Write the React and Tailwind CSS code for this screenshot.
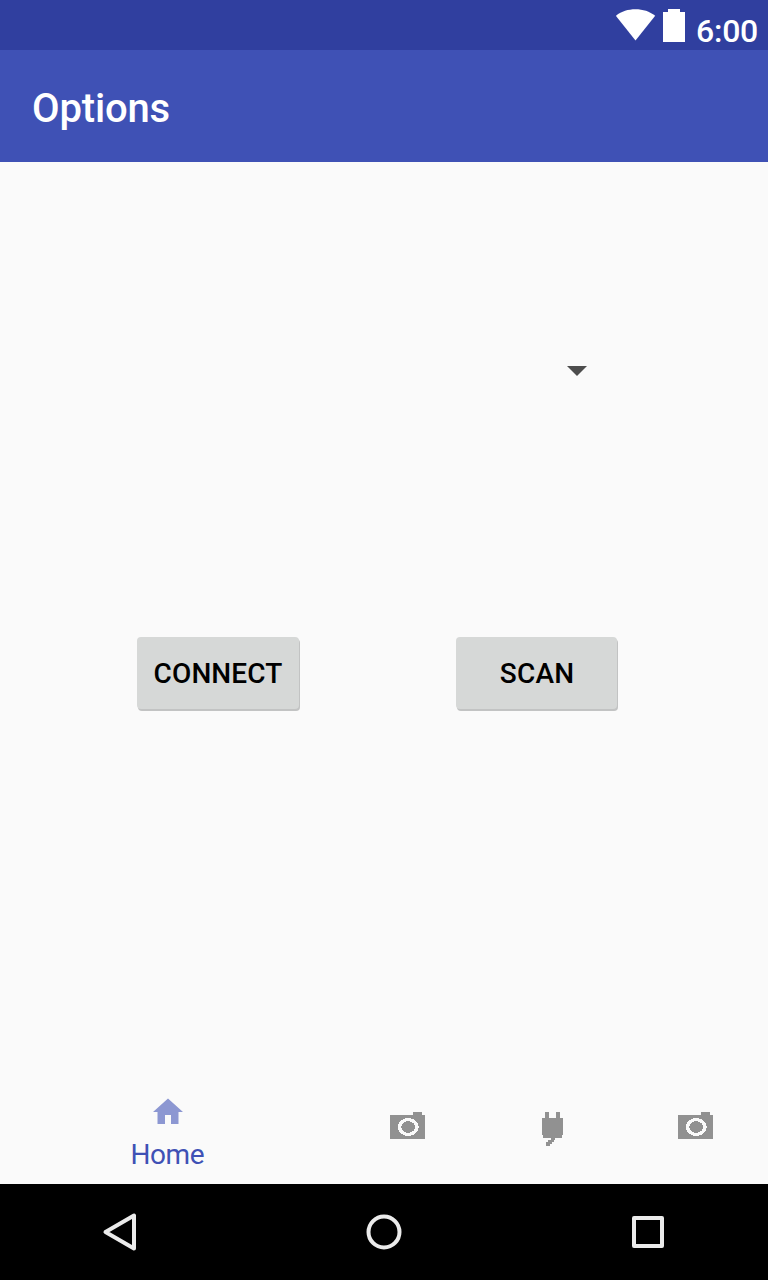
function StatusBar() {
  return (
    <header className="flex h-[50px] items-start justify-end bg-[#303f9f] pr-[10px] text-white">
      <svg className="mt-[9px] h-8 w-10 shrink-0" viewBox="0 0 40 32" fill="currentColor">
        <path d="M-0.200 6.800C5.500 2.200 12 0.200 19.500 0.200s14 2 19.700 6.600L19.500 31.500z" />
      </svg>
      <svg className="mt-[9px] ml-[7px] h-[33px] w-[22px] shrink-0" viewBox="0 0 22 33" fill="currentColor">
        <path d="M0 3h5V0h12v3h5v30H0z" />
      </svg>
      <span className="mt-[11px] ml-[11px] text-[32px] leading-[40px] font-medium tracking-[-0.250px]">6:00</span>
    </header>
  );
}

function RaisedButton({ children, className }) {
  return (
    <button
      className={`h-[72px] rounded-[4px] bg-[#d6d8d7] pt-[2px] text-[28px] leading-8 font-medium text-black shadow-[1px_2px_0_0_#c2c3c3] ${className}`}
    >
      {children}
    </button>
  );
}

function CameraIcon() {
  return (
    <svg className="size-12" viewBox="0 0 48 48" shapeRendering="crispEdges">
      <path d="M6 11h23V8h9v3h3v24H6z" fill="#919191" />
      <ellipse cx="24.300" cy="23" rx="10.500" ry="9" fill="#fafafa" />
      <ellipse cx="24.200" cy="23" rx="6.900" ry="5.800" fill="#919191" />
    </svg>
  );
}

function PlugIcon() {
  return (
    <svg className="size-12" viewBox="0 0 48 48" fill="#919191" shapeRendering="crispEdges">
      <path d="M17 8h4v6h7V8h4v6h3v17h-1v3h-7v2h-1v2h-2v2h-2v2h-4v-4h2v-2h3v-2h-8v-3h-1V14h3z" />
    </svg>
  );
}

export default function App() {
  return (
    <div className="flex h-[1280px] w-[768px] flex-col overflow-hidden bg-[#fafafa] font-[Roboto,sans-serif]">
      <StatusBar />
      <div className="flex h-28 shrink-0 items-center bg-[#3f51b5] px-8 pt-[6px]">
        <h1 className="text-[40px] leading-[48px] font-medium tracking-[-0.150px] text-white">Options</h1>
      </div>
      <main className="flex flex-1 flex-col">
        <div className="flex justify-end pt-[204px] pr-[181px]">
          <svg className="h-[10px] w-5" viewBox="0 0 20 10" fill="#4d4d4d">
            <path d="M0 0h20L10 10z" />
          </svg>
        </div>
        <div className="mt-[261px] flex gap-[157px] pl-[137px]">
          <RaisedButton className="w-[162px] tracking-[0.100px]">CONNECT</RaisedButton>
          <RaisedButton className="w-[161px] pl-px tracking-[0.200px]">SCAN</RaisedButton>
        </div>
      </main>
      <nav className="flex h-28 shrink-0">
        <div className="flex w-[336px] flex-col items-center pt-[22px]">
          <svg className="size-9" viewBox="0 0 24 24" fill="#8c97d2">
            <path d="M10 20v-6h4v6h5v-8h3L12 3 2 12h3v8z" />
          </svg>
          <span className="mt-[9px] pr-[1.500px] text-[28px] leading-8 tracking-[-0.400px] text-[#3f51b5]">Home</span>
        </div>
        <div className="flex w-36 items-center justify-center">
          <CameraIcon />
        </div>
        <div className="flex w-36 items-center justify-center">
          <PlugIcon />
        </div>
        <div className="flex w-36 items-center justify-center">
          <CameraIcon />
        </div>
      </nav>
      <footer className="flex h-24 shrink-0 items-center justify-between bg-black px-[100px] text-[#ebebeb]">
        <svg className="size-10" viewBox="0 0 40 40" fill="none" stroke="currentColor" strokeWidth="4" strokeLinejoin="round">
          <path d="M34 3.500v33L5.500 20z" />
        </svg>
        <svg className="size-10" viewBox="0 0 40 40" fill="none" stroke="currentColor" strokeWidth="4">
          <circle cx="20" cy="20" r="15.500" />
        </svg>
        <svg className="size-10" viewBox="0 0 40 40" fill="none" stroke="currentColor" strokeWidth="4" strokeLinejoin="round">
          <path d="M6 6h28v28H6z" />
        </svg>
      </footer>
    </div>
  );
}
